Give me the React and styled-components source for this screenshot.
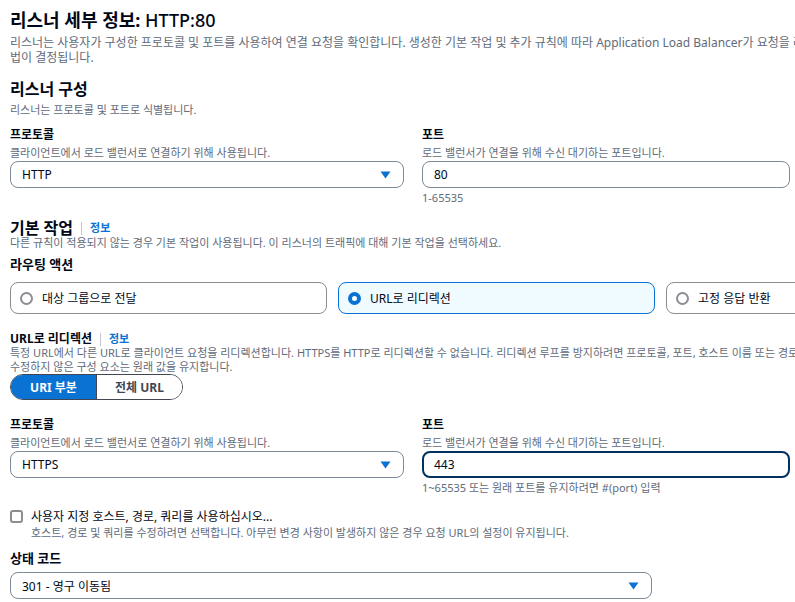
import React from "react"
import styled, { createGlobalStyle } from "styled-components"

const GlobalStyle = createGlobalStyle`
  html, body {
    margin: 0;
    padding: 0;
    background: #ffffff;
    overflow: hidden;
  }
  body {
    font-family: "Noto Sans", "Noto Sans CJK KR", sans-serif;
    color: #000716;
  }
`

const Page = styled.div`
  width: 1000px;
  padding: 8px 0 0 10px;
`

const Title = styled.h1`
  margin: 0;
  font-size: 18px;
  line-height: 24px;
  font-weight: 700;
  white-space: nowrap;
`

const TitleLight = styled.span`
  font-weight: 500;
`

const Description = styled.p`
  margin: ${(p) => p.$margin || "0"};
  font-size: ${(p) => p.$size || 12}px;
  line-height: ${(p) => p.$lh || 15}px;
  color: #5f6b7a;
  white-space: nowrap;
`

const SectionTitle = styled.h2`
  display: flex;
  align-items: center;
  gap: 8px;
  margin: ${(p) => p.$margin || "0"};
  font-size: ${(p) => p.$size || 16}px;
  line-height: ${(p) => p.$lh || 20}px;
  font-weight: 700;
`

const InfoDivider = styled.span`
  width: 1px;
  height: 13px;
  background: #c6c6cd;
`

const InfoLink = styled.a`
  font-size: 11px;
  font-weight: 700;
  color: #0972d3;
  text-decoration: none;
`

const FieldGrid = styled.div`
  display: grid;
  grid-template-columns: 394px 368px;
  column-gap: 18px;
  margin: ${(p) => p.$margin || "0"};
`

const Field = styled.div`
  display: flex;
  flex-direction: column;
`

const Label = styled.div`
  font-size: 12px;
  line-height: 16px;
  font-weight: 700;
`

const Hint = styled.div`
  font-size: 11px;
  line-height: 14px;
  color: #5f6b7a;
  margin-top: ${(p) => p.$top ?? 3}px;
  white-space: nowrap;
`

const Box = styled.div`
  box-sizing: border-box;
  width: ${(p) => p.$width || "100%"};
  height: 27px;
  margin-top: ${(p) => p.$top ?? 1}px;
  display: flex;
  align-items: center;
  justify-content: space-between;
  padding: 0 12px 0 ${(p) => (p.$focused ? 10 : 11)}px;
  border: ${(p) => (p.$focused ? "2px solid #033160" : "1px solid #7d8998")};
  border-radius: 8px;
  font-size: 12px;
  color: #000716;
`

const Caret = () => (
  <svg width="11" height="8" viewBox="0 0 11 8">
    <path d="M0.5 0.5 H10.5 L5.5 7.5 Z" fill="#0972d3" />
  </svg>
)

const Tiles = styled.div`
  display: grid;
  grid-template-columns: repeat(3, 317px);
  gap: 11px;
  margin-top: 8px;
`

const Tile = styled.div`
  box-sizing: border-box;
  height: 32px;
  display: flex;
  align-items: center;
  gap: 9px;
  padding-left: 9px;
  border-radius: 8px;
  border: ${(p) => (p.$active ? "1.5px solid #0972d3" : "1px solid #8c8c94")};
  background: ${(p) => (p.$active ? "#f0fbff" : "#ffffff")};
  font-size: 12px;
`

const Radio = styled.span`
  box-sizing: border-box;
  width: 13px;
  height: 13px;
  border-radius: 50%;
  background: #ffffff;
  border: ${(p) => (p.$active ? "4px solid #0972d3" : "2px solid #8c8c94")};
`

const Segmented = styled.div`
  display: inline-flex;
  margin-top: 0;
  height: 26px;
  box-sizing: border-box;
  border: 1px solid #424650;
  border-radius: 13px;
  overflow: hidden;
`

const Segment = styled.div`
  width: 85px;
  display: flex;
  align-items: center;
  justify-content: center;
  font-size: 12px;
  font-weight: 700;
  color: ${(p) => (p.$active ? "#ffffff" : "#424650")};
  background: ${(p) => (p.$active ? "#0972d3" : "#ffffff")};
  & + & {
    border-left: 1px solid #424650;
  }
`

const CheckRow = styled.div`
  display: flex;
  gap: 8px;
  margin-top: 14px;
`

const Checkbox = styled.span`
  box-sizing: border-box;
  width: 13px;
  height: 13px;
  margin-top: 1px;
  border: 2px solid #8c8c94;
  border-radius: 3px;
  flex-shrink: 0;
`

const CheckText = styled.div`
  display: flex;
  flex-direction: column;
`

const CheckLabel = styled.div`
  font-size: 12px;
  line-height: 16px;
`

export default function App() {
  return (
    <>
      <GlobalStyle />
      <Page>
        <Title>
          리스너 세부 정보: <TitleLight>HTTP:80</TitleLight>
        </Title>
        <Description $margin="3px 0 0">
          리스너는 사용자가 구성한 프로토콜 및 포트를 사용하여 연결 요청을 확인합니다. 생성한 기본 작업 및 추가 규칙에 따라 Application Load Balancer가 요청을 라우팅하는 방
          <br />
          법이 결정됩니다.
        </Description>

        <SectionTitle $margin="14px 0 0">리스너 구성</SectionTitle>
        <Description $size={11} $margin="3px 0 0">
          리스너는 프로토콜 및 포트로 식별됩니다.
        </Description>

        <FieldGrid $margin="10px 0 0">
          <Field>
            <Label>프로토콜</Label>
            <Hint>클라이언트에서 로드 밸런서로 연결하기 위해 사용됩니다.</Hint>
            <Box>
              HTTP
              <Caret />
            </Box>
          </Field>
          <Field>
            <Label>포트</Label>
            <Hint>로드 밸런서가 연결을 위해 수신 대기하는 포트입니다.</Hint>
            <Box>80</Box>
            <Hint>1-65535</Hint>
          </Field>
        </FieldGrid>

        <SectionTitle $lh={14} $margin="16px 0 0">
          기본 작업 <InfoDivider /> <InfoLink>정보</InfoLink>
        </SectionTitle>
        <Description $size={11}>
          다른 규칙이 적용되지 않는 경우 기본 작업이 사용됩니다. 이 리스너의 트래픽에 대해 기본 작업을 선택하세요.
        </Description>

        <SectionTitle $size={13} $margin="4px 0 0">라우팅 액션</SectionTitle>
        <Tiles>
          <Tile>
            <Radio />
            대상 그룹으로 전달
          </Tile>
          <Tile $active>
            <Radio $active />
            URL로 리디렉션
          </Tile>
          <Tile>
            <Radio />
            고정 응답 반환
          </Tile>
        </Tiles>

        <SectionTitle $size={12} $lh={14} $margin="18px 0 0">
          URL로 리디렉션 <InfoDivider /> <InfoLink>정보</InfoLink>
        </SectionTitle>
        <Description $size={11} $lh={14}>
          특정 URL에서 다른 URL로 클라이언트 요청을 리디렉션합니다. HTTPS를 HTTP로 리디렉션할 수 없습니다. 리디렉션 루프를 방지하려면 프로토콜, 포트, 호스트 이름 또는 경로 구성 요소 중 하나 이상을
          <br />
          수정하지 않은 구성 요소는 원래 값을 유지합니다.
        </Description>
        <Segmented>
          <Segment $active>URI 부분</Segment>
          <Segment>전체 URL</Segment>
        </Segmented>

        <FieldGrid $margin="17px 0 0">
          <Field>
            <Label>프로토콜</Label>
            <Hint>클라이언트에서 로드 밸런서로 연결하기 위해 사용됩니다.</Hint>
            <Box>
              HTTPS
              <Caret />
            </Box>
          </Field>
          <Field>
            <Label>포트</Label>
            <Hint>로드 밸런서가 연결을 위해 수신 대기하는 포트입니다.</Hint>
            <Box $focused>443</Box>
            <Hint>1~65535 또는 원래 포트를 유지하려면 #(port) 입력</Hint>
          </Field>
        </FieldGrid>

        <CheckRow>
          <Checkbox />
          <CheckText>
            <CheckLabel>사용자 지정 호스트, 경로, 쿼리를 사용하십시오...</CheckLabel>
            <Hint $top={1}>
              호스트, 경로 및 쿼리를 수정하려면 선택합니다. 아무런 변경 사항이 발생하지 않은 경우 요청 URL의 설정이 유지됩니다.
            </Hint>
          </CheckText>
        </CheckRow>

        <SectionTitle $size={13} $margin="8px 0 0">상태 코드</SectionTitle>
        <Box $width="642px" $top={4}>
          301 - 영구 이동됨
          <Caret />
        </Box>
      </Page>
    </>
  )
}
